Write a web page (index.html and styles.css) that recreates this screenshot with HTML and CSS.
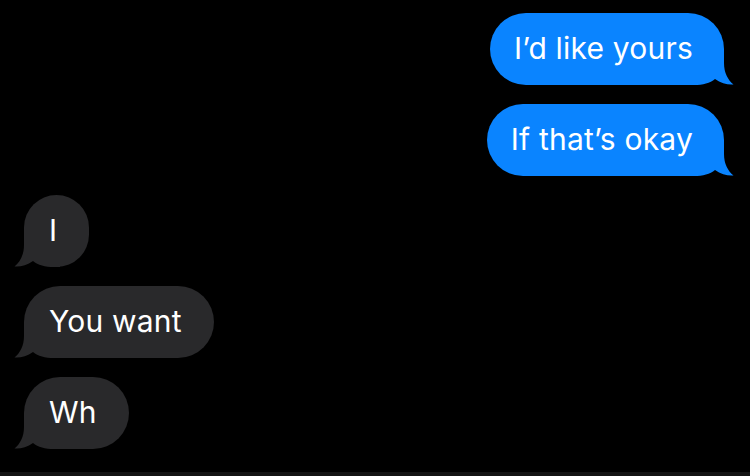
FILE: index.html
```html
<!DOCTYPE html>
<html>
<head>
<meta charset="utf-8">
<link rel="stylesheet" href="styles.css">
</head>
<body>
<main class="thread">
  <div class="row row-out">
    <div class="bubble out"><span class="text">I’d like yours</span>
      <svg class="tail" width="46" height="36" viewBox="0 0 46 36"><path d="M36,0 L36,14 C36,24 40,31 45.5,35.5 C40,36 33,34.5 27,30 C22,34 15,36 6,36 L0,36 L0,0 Z"/></svg>
    </div>
  </div>
  <div class="row row-out">
    <div class="bubble out"><span class="text">If that’s okay</span>
      <svg class="tail" width="46" height="36" viewBox="0 0 46 36"><path d="M36,0 L36,14 C36,24 40,31 45.5,35.5 C40,36 33,34.5 27,30 C22,34 15,36 6,36 L0,36 L0,0 Z"/></svg>
    </div>
  </div>
  <div class="row row-in">
    <div class="bubble in"><span class="text">I</span>
      <svg class="tail" width="46" height="36" viewBox="0 0 46 36"><path d="M36,0 L36,14 C36,24 40,31 45.5,35.5 C40,36 33,34.5 27,30 C22,34 15,36 6,36 L0,36 L0,0 Z"/></svg>
    </div>
  </div>
  <div class="row row-in">
    <div class="bubble in"><span class="text">You want</span>
      <svg class="tail" width="46" height="36" viewBox="0 0 46 36"><path d="M36,0 L36,14 C36,24 40,31 45.5,35.5 C40,36 33,34.5 27,30 C22,34 15,36 6,36 L0,36 L0,0 Z"/></svg>
    </div>
  </div>
  <div class="row row-in">
    <div class="bubble in"><span class="text">Wh</span>
      <svg class="tail" width="46" height="36" viewBox="0 0 46 36"><path d="M36,0 L36,14 C36,24 40,31 45.5,35.5 C40,36 33,34.5 27,30 C22,34 15,36 6,36 L0,36 L0,0 Z"/></svg>
    </div>
  </div>
</main>
<div class="bottom-bar"></div>
</body>
</html>
```

FILE: styles.css
```css
html, body {
  margin: 0;
  padding: 0;
  background: #000;
}
body {
  width: 750px;
  height: 476px;
  display: flex;
  flex-direction: column;
  overflow: hidden;
  font-family: "Inter", "Liberation Sans", sans-serif;
}
.thread {
  flex: 1;
  display: flex;
  flex-direction: column;
  gap: 19px;
  padding-top: 13px;
}
.row {
  display: flex;
}
.row-out {
  justify-content: flex-end;
  padding-right: 26px;
}
.row-in {
  justify-content: flex-start;
  padding-left: 24px;
}
.bubble {
  position: relative;
  height: 72px;
  display: flex;
  align-items: center;
  border-radius: 36px;
  color: #fff;
  font-size: 30px;
  line-height: 1;
  letter-spacing: 0.2px;
  box-sizing: border-box;
}
.text {
  position: relative;
  z-index: 1;
  margin-top: -3px;
}
.bubble.out {
  background: #0a84ff;
  padding: 0 31px 0 24px;
}
.bubble.in {
  background: #29292b;
  padding: 0 32px 0 25px;
}
.tail {
  position: absolute;
  bottom: 0;
}
.out .tail {
  right: -10px;
  fill: #0a84ff;
}
.in .tail {
  left: -10px;
  transform: scaleX(-1);
  fill: #29292b;
}
.bottom-bar {
  height: 4px;
  background: #131313;
}
```
